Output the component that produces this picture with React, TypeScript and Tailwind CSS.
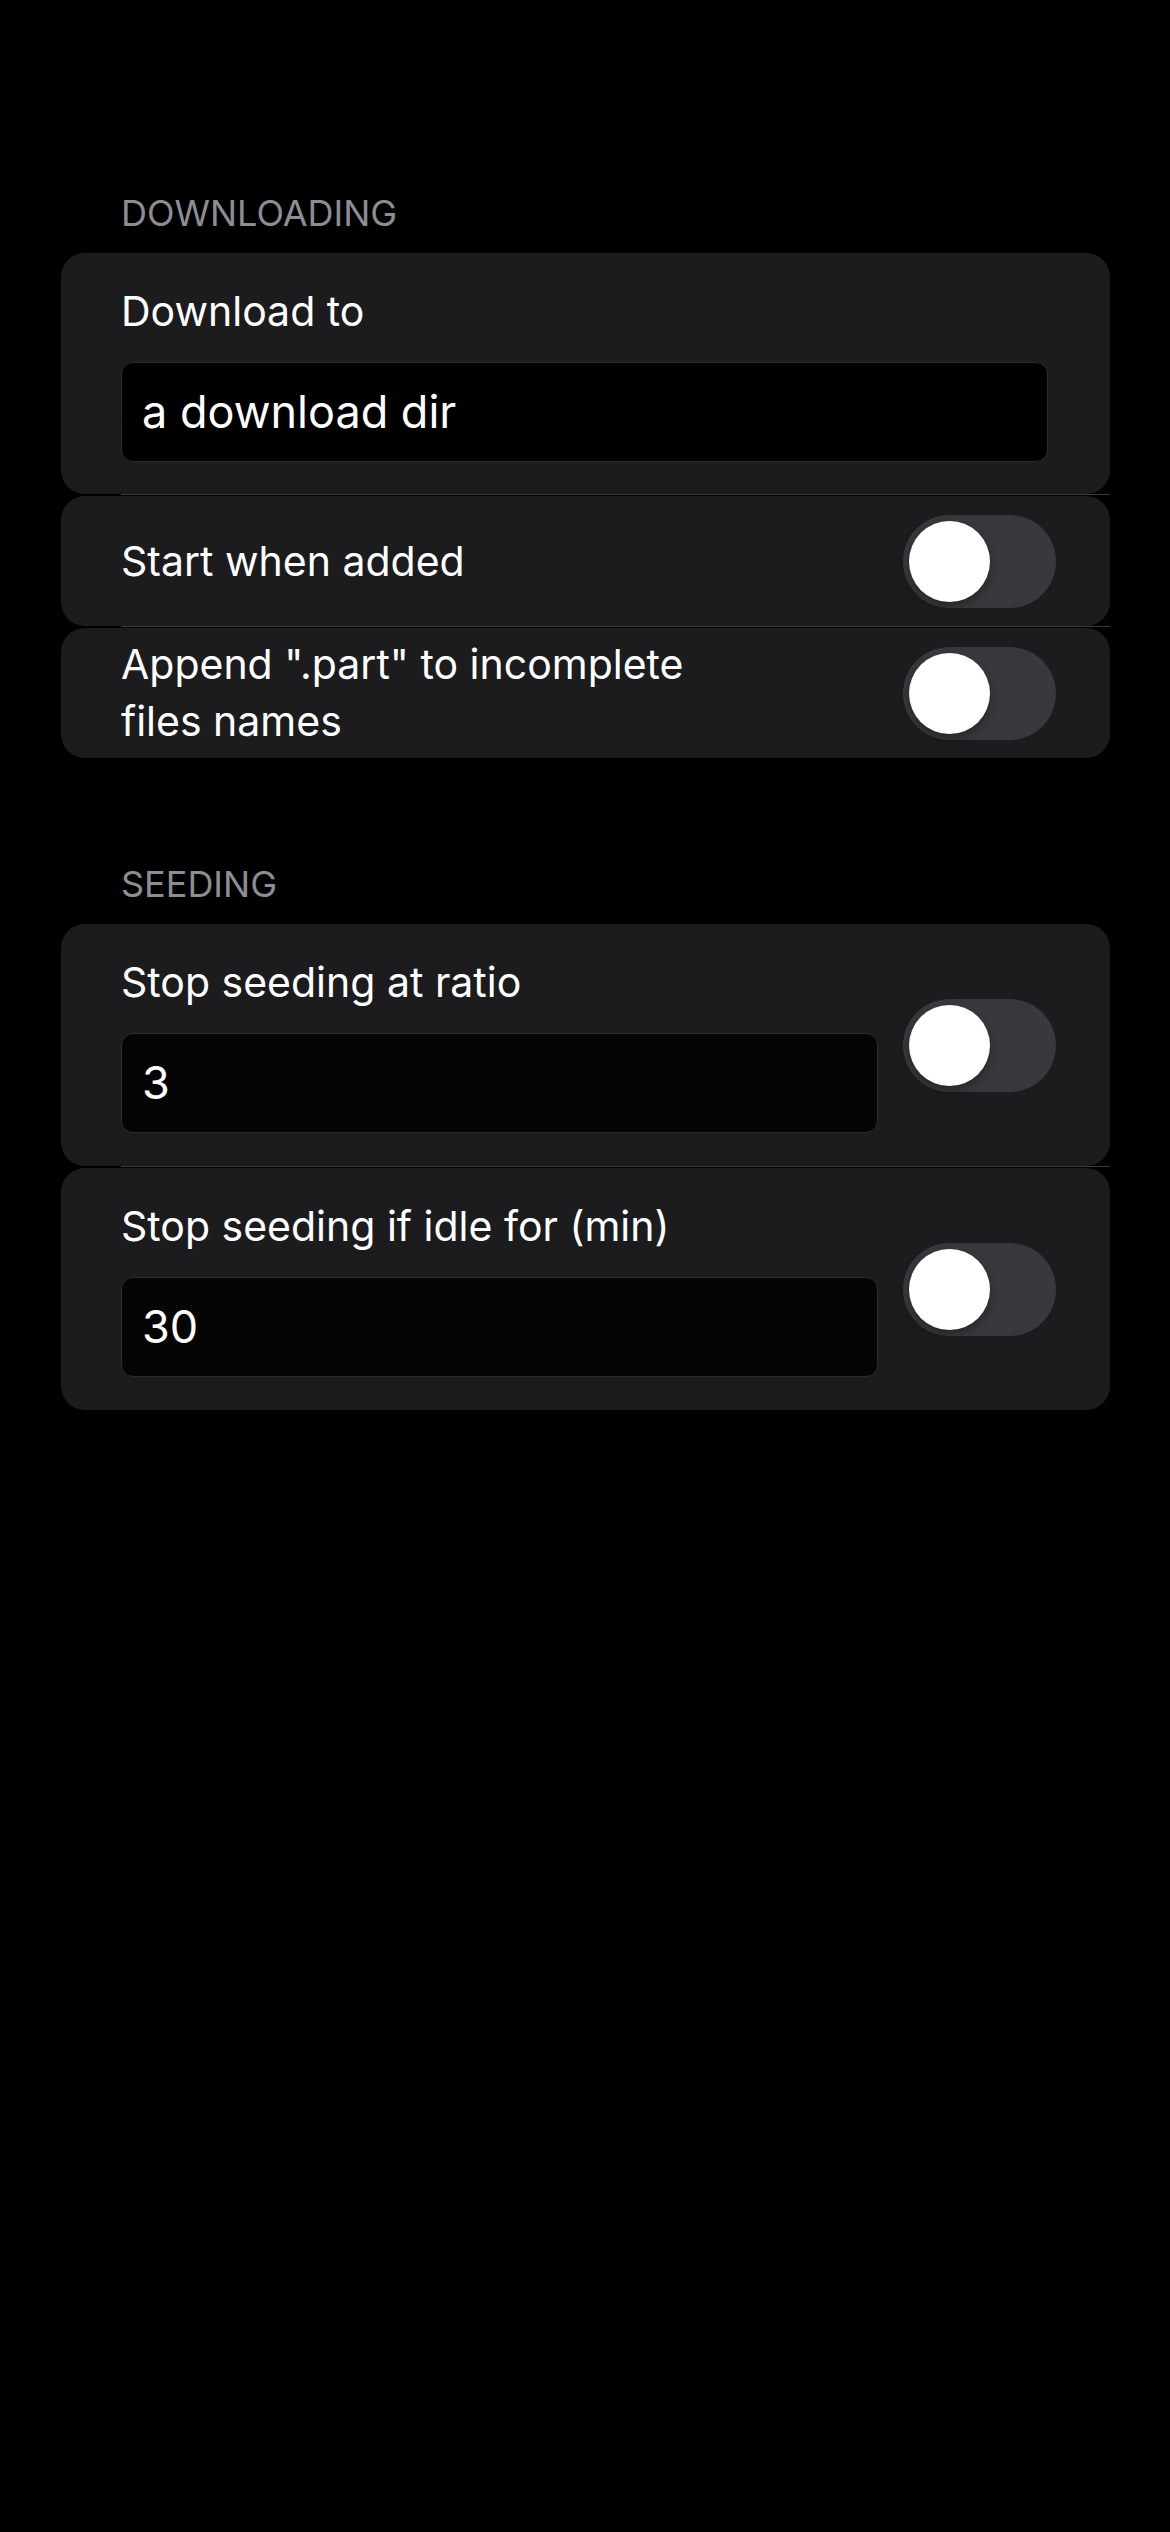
import React from "react";

// iOS-style switch, off state
const Toggle = () => (
  <div className="relative h-[93px] w-[153px] shrink-0 rounded-full bg-[#39393d]">
    <div className="absolute left-[6px] top-[6px] h-[81px] w-[81px] rounded-full bg-white shadow-[0_4px_10px_rgba(0,0,0,0.35)]" />
  </div>
);

const Separator = () => (
  <div className="h-[2px] pl-[60px]">
    <div className="h-px w-full bg-[#3a3a3c]" />
  </div>
);

const SectionHeader = ({ title }: { title: string }) => (
  <div className="mb-[18px] pl-[60px] text-[36px] leading-[44px] text-[#8d8d93]">{title}</div>
);

const TextField = ({ value, dark }: { value: string; dark?: boolean }) => (
  <div
    className={
      dark
        ? "mt-[27px] flex h-[100px] items-center rounded-[12px] border border-[#2c2c2e] bg-black px-[20px] text-[45px]"
        : "mt-[27px] flex h-[100px] items-center rounded-[12px] border border-[#2c2c2e] bg-[#050505] px-[20px] text-[45px]"
    }
  >
    {value}
  </div>
);

const FieldToggleRow = ({ label, value }: { label: string; value: string }) => (
  <div className="flex items-center rounded-[24px] bg-[#1c1c1e] pl-[60px] pr-[54px]">
    <div className="flex-1 pb-[33px] pt-[34px]">
      <div className="text-[41px] leading-[48px]">{label}</div>
      <TextField value={value} />
    </div>
    <div className="ml-[25px]">
      <Toggle />
    </div>
  </div>
);

export default function App() {
  return (
    <div className="min-h-screen bg-black pl-[61px] pr-[60px] pt-[191px] font-['Inter',sans-serif] text-white">
      <SectionHeader title="DOWNLOADING" />

      <div className="rounded-[24px] bg-[#1c1c1e] pb-[32px] pl-[60px] pr-[62px] pt-[34px]">
        <div className="text-[41px] leading-[48px]">Download to</div>
        <TextField value="a download dir" dark />
      </div>
      <Separator />
      <div className="flex h-[130px] items-center justify-between rounded-[24px] bg-[#1c1c1e] pl-[60px] pr-[54px]">
        <div className="text-[41px] leading-[48px]">Start when added</div>
        <Toggle />
      </div>
      <Separator />
      <div className="flex h-[130px] items-center justify-between rounded-[24px] bg-[#1c1c1e] pl-[60px] pr-[54px]">
        <div className="w-[620px] text-[41px] leading-[57px]">
          Append ".part" to incomplete
          <br />
          files names
        </div>
        <Toggle />
      </div>

      <div className="h-[104px]" />

      <SectionHeader title="SEEDING" />
      <FieldToggleRow label="Stop seeding at ratio" value="3" />
      <Separator />
      <FieldToggleRow label="Stop seeding if idle for (min)" value="30" />
    </div>
  );
}
